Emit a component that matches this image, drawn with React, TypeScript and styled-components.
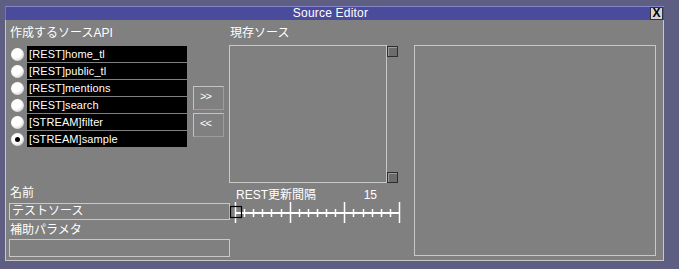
import * as React from 'react';
import styled, { createGlobalStyle } from 'styled-components';

const GlobalStyle = createGlobalStyle`
	html, body {
		margin: 0;
		padding: 0;
		width: 679px;
		height: 269px;
		overflow: hidden;
		background: #5e5e82;
	}
	* {
		box-sizing: border-box;
	}
`;

const FONT = `"Liberation Sans", "Noto Sans CJK JP", sans-serif`;

const apis = [
	'[REST]home_tl',
	'[REST]public_tl',
	'[REST]mentions',
	'[REST]search',
	'[STREAM]filter',
	'[STREAM]sample',
];

const Window = styled.div`
	margin: 6px 0 0 5px;
	width: 659px;
	font-family: ${FONT};
	color: #fff;
`;

const TitleBar = styled.div`
	height: 14px;
	display: flex;
	align-items: center;
	background: #4b4b9c;
	box-shadow: inset 0 1px 0 #8585cc, inset 1px 0 0 #7373bb;
`;

const Title = styled.div`
	flex: 1;
	padding-left: 6px;
	text-align: center;
	font-size: 12px;
	line-height: 14px;
	letter-spacing: 0.2px;
`;

const CloseButton = styled.div`
	width: 13px;
	height: 13px;
	margin-right: 1px;
	display: flex;
	align-items: center;
	justify-content: center;
	background: #d4d4d8;
	border: 1px solid #303040;
	color: #000;
	font-size: 12px;
	font-weight: bold;
	line-height: 11px;
`;

const Body = styled.div`
	background: #808080;
	border: 1px solid #c8c8c8;
	border-top: none;
	padding: 6px 7px 2px 3px;
	display: grid;
	grid-template-columns: 220px 185px 242px;
	grid-template-rows: 159px 73px;
`;

const Cell = styled.div`
	display: flex;
	flex-direction: column;
`;

const Label = styled.div<{ $top?: number; $indent?: number }>`
	font-size: 12px;
	line-height: 14px;
	height: 14px;
	margin-top: ${p => p.$top ?? 0}px;
	padding-left: ${p => p.$indent ?? 1}px;
	white-space: nowrap;
`;

const Split = styled.div`
	display: flex;
	align-items: flex-start;
`;

const ApiList = styled.div`
	margin-top: 6px;
	display: flex;
	flex-direction: column;
	gap: 1px;
`;

const ApiRow = styled.div`
	display: flex;
	align-items: center;
	height: 16px;
`;

const Radio = styled.div<{ $checked?: boolean }>`
	width: 13px;
	height: 13px;
	margin-left: 2px;
	border-radius: 50%;
	background: radial-gradient(circle at 38% 35%, #ffffff 45%, #d6d6d6 75%, #a8a8a8 100%);
	display: flex;
	align-items: center;
	justify-content: center;
	&::after {
		content: '';
		display: ${p => (p.$checked ? 'block' : 'none')};
		width: 5px;
		height: 5px;
		border-radius: 50%;
		background: #000;
	}
`;

const ApiName = styled.div`
	margin-left: 3px;
	width: 160px;
	height: 16px;
	background: #000;
	padding-left: 2px;
	font-size: 11px;
	line-height: 16px;
	letter-spacing: 0.1px;
`;

const MoveButtons = styled.div`
	margin: 46px 0 0 6px;
	display: flex;
	flex-direction: column;
	gap: 3px;
`;

const MoveButton = styled.div`
	width: 31px;
	height: 24px;
	border: 1px solid #c4c4c4;
	border-right-color: #9c9c9c;
	border-bottom-color: #9c9c9c;
	font-size: 11px;
	line-height: 14px;
	padding: 2px 0 0 6px;
	letter-spacing: -1px;
`;

const SourceBox = styled.div`
	margin-top: 5px;
	width: 158px;
	height: 138px;
	border: 1px solid #c8c8c8;
`;

const ScrollColumn = styled.div`
	margin-top: 6px;
	height: 137px;
	display: flex;
	flex-direction: column;
	justify-content: space-between;
`;

const ScrollSquare = styled.div`
	width: 11px;
	height: 11px;
	border: 1px solid #2e2e2e;
	background: #6c6c6c;
	box-shadow: inset 1px 1px 0 #9a9a9a;
`;

const RightPanel = styled.div`
	grid-column: 3;
	grid-row: 1 / span 2;
	margin-top: 19px;
	height: 211px;
	border: 1px solid #c8c8c8;
`;

const TextField = styled.div<{ $top: number; $height: number }>`
	margin-top: ${p => p.$top}px;
	width: 221px;
	height: ${p => p.$height}px;
	border: 1px solid #c8c8c8;
	font-size: 12px;
	line-height: 15px;
	padding-left: 2px;
`;

const SliderHead = styled.div`
	margin-top: 3px;
	width: 148px;
	padding-left: 7px;
	display: flex;
	justify-content: space-between;
	font-size: 12px;
	line-height: 14px;
`;

const SliderTrack = styled.svg`
	display: block;
	margin-top: 0px;
`;

const Slider: React.FC = () => {
	const ticks = Array.from({ length: 19 }, (_, i) => i);
	return (
		<SliderTrack width="172" height="22" viewBox="0 0 172 22">
			<line x1="6" y1="11" x2="171" y2="11" stroke="#fff" strokeWidth="2" />
			{ticks.map(i => {
				const x = Math.round(6 + (i * 164) / 18) + 0.5;
				const big = i % 6 === 0;
				return (
					<line
						key={i}
						x1={x}
						x2={x}
						y1={big ? 0 : 7}
						y2={big ? 21 : 15}
						stroke="#fff"
						strokeWidth="1.5"
					/>
				);
			})}
			<rect x="1.5" y="4.5" width="11" height="11" fill="none" stroke="#000" strokeWidth="1.2" />
		</SliderTrack>
	);
};

const App: React.FunctionComponent = () => {
	return (
		<>
			<GlobalStyle />
			<Window>
				<TitleBar>
					<Title>Source Editor</Title>
					<CloseButton>X</CloseButton>
				</TitleBar>
				<Body>
					<Cell>
						<Label>作成するソースAPI</Label>
						<Split>
							<ApiList>
								{apis.map((name, i) => (
									<ApiRow key={name}>
										<Radio $checked={i === apis.length - 1} />
										<ApiName>{name}</ApiName>
									</ApiRow>
								))}
							</ApiList>
							<MoveButtons>
								<MoveButton>&gt;&gt;</MoveButton>
								<MoveButton>&lt;&lt;</MoveButton>
							</MoveButtons>
						</Split>
					</Cell>
					<Cell>
						<Label>現存ソース</Label>
						<Split>
							<SourceBox />
							<ScrollColumn>
								<ScrollSquare />
								<ScrollSquare />
							</ScrollColumn>
						</Split>
					</Cell>
					<RightPanel />
					<Cell>
						<Label $top={1}>名前</Label>
						<TextField $top={3} $height={17}>
							テストソース
						</TextField>
						<Label $top={3}>補助パラメタ</Label>
						<TextField $top={2} $height={18} />
					</Cell>
					<Cell>
						<SliderHead>
							<span>REST更新間隔</span>
							<span>15</span>
						</SliderHead>
						<Slider />
					</Cell>
				</Body>
			</Window>
		</>
	);
};

export default App;
